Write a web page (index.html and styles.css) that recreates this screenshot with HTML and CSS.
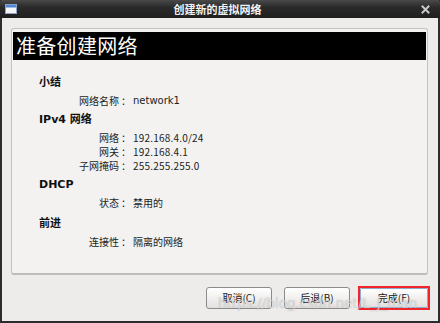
FILE: index.html
```html
<!DOCTYPE html>
<html lang="zh-CN">
<head>
<meta charset="utf-8">
<title>创建新的虚拟网络</title>
<link rel="stylesheet" href="styles.css">
</head>
<body>
<div class="window">
  <div class="titlebar">
    <svg class="app-icon" width="12" height="10" viewBox="0 0 12 10">
      <rect x="0.5" y="0.5" width="11" height="9" fill="#f4f6fa" stroke="#8ea3c6"/>
      <rect x="1" y="1" width="10" height="2.5" fill="#4f86d6"/>
    </svg>
    <span class="title">创建新的虚拟网络</span>
    <svg class="close" width="9" height="9" viewBox="0 0 9 9">
      <path d="M1.5 1.5 L7.5 7.5 M7.5 1.5 L1.5 7.5" stroke="#c8c8c8" stroke-width="2" stroke-linecap="square"/>
    </svg>
  </div>
  <div class="content">
    <div class="panel">
      <div class="banner">准备创建网络</div>
      <div class="summary">
        <section class="group">
          <h3 class="heading">小结</h3>
          <div class="row"><span class="lbl">网络名称</span><span class="colon">：</span><span class="val latin">network1</span></div>
        </section>
        <section class="group">
          <h3 class="heading">IPv4 网络</h3>
          <div class="row"><span class="lbl">网络</span><span class="colon">：</span><span class="val num">192.168.4.0/24</span></div>
          <div class="row"><span class="lbl">网关</span><span class="colon">：</span><span class="val num">192.168.4.1</span></div>
          <div class="row"><span class="lbl">子网掩码</span><span class="colon">：</span><span class="val num">255.255.255.0</span></div>
        </section>
        <section class="group">
          <h3 class="heading">DHCP</h3>
          <div class="row"><span class="lbl">状态</span><span class="colon">：</span><span class="val">禁用的</span></div>
        </section>
        <section class="group group-last">
          <h3 class="heading">前进</h3>
          <div class="row"><span class="lbl">连接性</span><span class="colon">：</span><span class="val">隔离的网络</span></div>
        </section>
      </div>
    </div>
    <div class="buttons">
      <button class="btn">取消(C)</button>
      <button class="btn">后退(B)</button>
      <span class="mark"><button class="btn btn-default">完成(F)</button></span>
    </div>
  </div>
  <span class="watermark">https://blog.csdn.net/L_J_man</span>
</div>
</body>
</html>
```

FILE: styles.css
```css
* { box-sizing: border-box; }
html, body { margin: 0; padding: 0; }
body {
  width: 440px;
  height: 323px;
  overflow: hidden;
  font-family: "DejaVu Sans", "Noto Sans CJK SC", sans-serif;
  font-size: 10px;
  color: #1a1a1a;
}
.window {
  position: relative;
  width: 440px;
  height: 323px;
  background: #edeceb;
  border-left: 2px solid #2c2c2c;
  border-right: 2px solid #2c2c2c;
  border-bottom: 2px solid #2c2c2c;
  display: flex;
  flex-direction: column;
}
.titlebar {
  height: 18px;
  margin: 0 -2px;
  background: linear-gradient(#4a4a4a, #2a2a2a 40%, #1f1f1f);
  border-radius: 3px 3px 0 0;
  display: flex;
  align-items: center;
  position: relative;
  padding: 0 10px 0 5px;
}
.app-icon { display: block; }
.title {
  flex: 1;
  text-align: center;
  color: #f2f2f2;
  font-family: "Noto Sans CJK SC", sans-serif;
  font-weight: bold;
  font-size: 11px;
  line-height: 18px;
  padding-right: 3px;
}
.close { display: block; }
.content {
  flex: 1;
  padding: 10px 8px 0 9px;
  display: flex;
  flex-direction: column;
}
.panel {
  height: 247px;
  margin-right: 2px;
  background: #f3f2f1;
  border: 1px solid #c4c3c2;
  border-bottom: 2px solid #bdbcbb;
  border-radius: 3px;
  padding: 3px 1px 0 1px;
}
.banner {
  height: 28px;
  background: #000;
  color: #fff;
  font-family: "Noto Sans CJK SC", sans-serif;
  font-size: 20px;
  line-height: 28px;
  padding-left: 3px;
  letter-spacing: 0.3px;
}
.summary {
  padding: 16px 0 0 26px;
  display: flex;
  flex-direction: column;
  gap: 5px;
}
.group { display: flex; flex-direction: column; }
.group-last { margin-top: 2px; }
.heading {
  margin: 0 0 4px 0;
  font-family: "DejaVu Sans", "Noto Sans CJK SC", sans-serif;
  font-size: 11px;
  font-weight: bold;
  line-height: 14px;
  color: #111;
}
.row {
  display: grid;
  grid-template-columns: 80px 14px auto;
  line-height: 14px;
  height: 14px;
}
.lbl {
  text-align: right;
  font-family: "Noto Sans CJK SC", sans-serif;
  color: #222;
}
.colon {
  text-align: center;
  font-family: "Noto Sans CJK SC", sans-serif;
}
.val { font-family: "Noto Sans CJK SC", sans-serif; color: #222; }
.val.latin { font-family: "DejaVu Sans", sans-serif; }
.val.num { font-family: "Noto Sans CJK SC", sans-serif; letter-spacing: 0.2px; }
.buttons {
  display: flex;
  justify-content: flex-end;
  align-items: center;
  margin-top: 11px;
  gap: 12px;
}
.btn {
  width: 66px;
  height: 22px;
  padding: 0;
  border: 1px solid #8c8b8a;
  border-radius: 3px;
  background: linear-gradient(#ffffff, #f1f0ef 50%, #e2e1e0);
  font-family: "Noto Sans CJK SC", "DejaVu Sans", sans-serif;
  font-size: 10px;
  color: #1a1a1a;
  line-height: 20px;
}
.mark {
  display: block;
  width: 72px;
  height: 24px;
  border: 2px solid #f2262a;
  margin-left: -4px;
}
.btn-default {
  display: block;
  width: 68px;
  height: 20px;
  border: 1px solid #90a8cc;
  border-radius: 1px;
  line-height: 18px;
}
.watermark {
  position: absolute;
  left: 216px;
  top: 295px;
  font-family: "DejaVu Sans", sans-serif;
  font-size: 13.5px;
  color: rgba(255, 255, 255, 0.55);
  text-shadow: 0 0 1px rgba(120, 120, 120, 0.6);
  white-space: nowrap;
  pointer-events: none;
}
```
